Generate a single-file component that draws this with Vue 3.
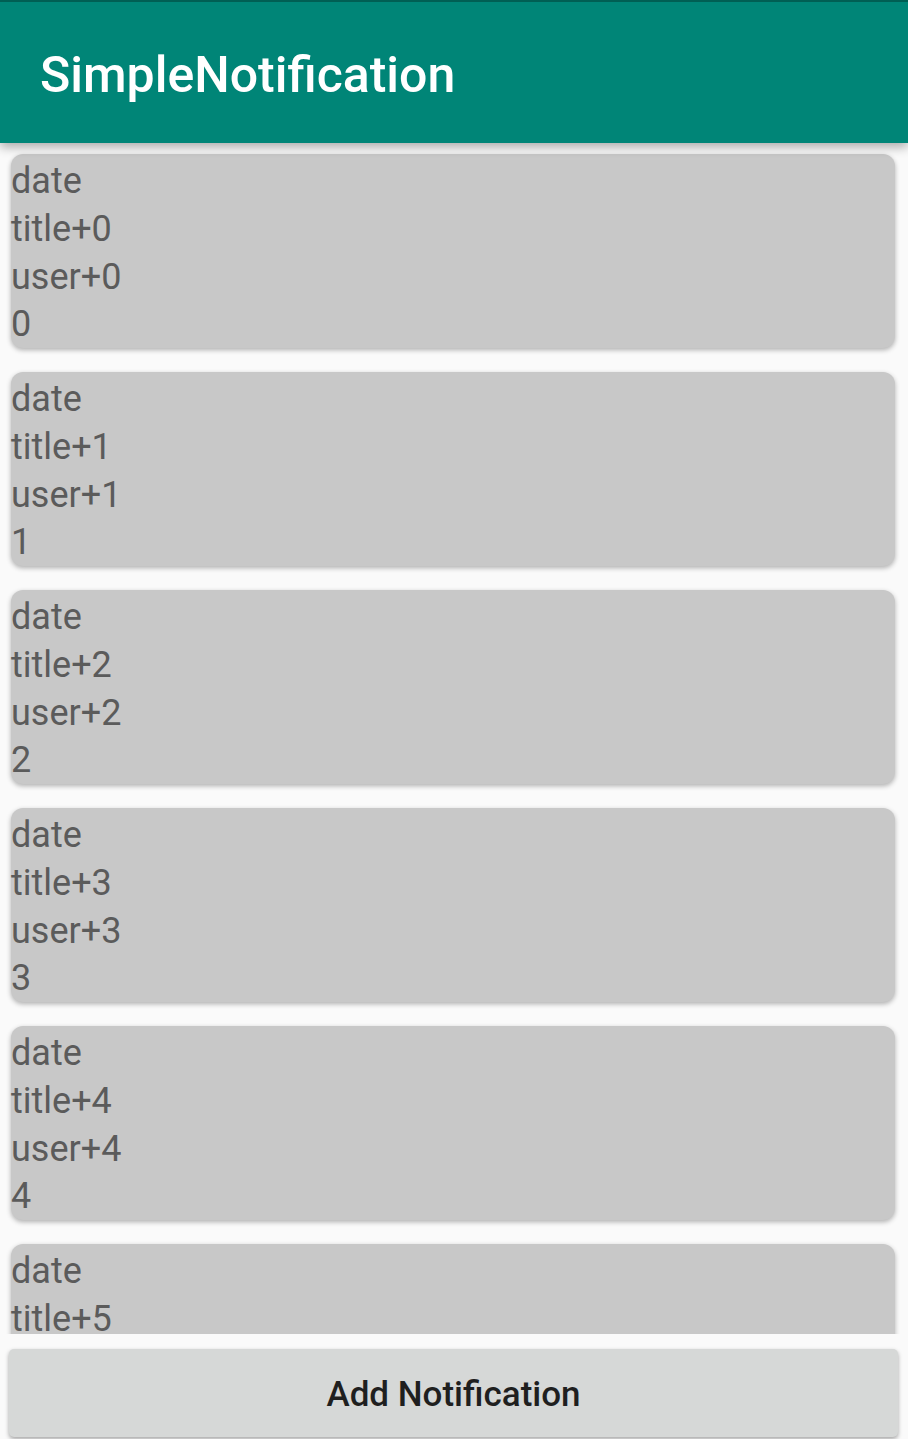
<script setup>
const items = Array.from({ length: 6 }, (_, i) => i)
</script>

<template>
  <div class="screen">
    <header class="bar"><h1>SimpleNotification</h1></header>
    <main class="list">
      <article v-for="n in items" :key="n" class="card">
        <p>date</p>
        <p>title+{{ n }}</p>
        <p>user+{{ n }}</p>
        <p>{{ n }}</p>
      </article>
    </main>
    <footer class="foot"><button type="button">Add Notification</button></footer>
  </div>
</template>

<style>
body { background: #fafafa; }
</style>

<style scoped>
.screen {
  display: flex;
  flex-direction: column;
  height: 100vh;
  overflow: hidden;
  background: #fafafa;
  font-family: Roboto, "Liberation Sans", sans-serif;
}
.bar {
  position: relative;
  flex: none;
  padding: 43px 40px 37px;
  border-top: 2px solid #005f54;
  background: #008577;
  box-shadow: 0 4px 10px rgba(0, 0, 0, 0.32);
  z-index: 1;
}
h1 {
  margin: 0;
  color: #fff;
  font-size: 50px;
  font-weight: 500;
  line-height: 61px;
}
.list {
  display: flex;
  flex: 1;
  flex-direction: column;
  gap: 24px;
  min-height: 0;
  overflow-y: auto;
  padding: 11px 13px 12px 11px;
  scrollbar-width: none;
}
.card {
  flex: none;
  padding-top: 3px;
  border-radius: 12px;
  background: #c8c8c8;
  box-shadow: 0 2px 5px rgba(0, 0, 0, 0.3);
}
p {
  margin: 0;
  color: #5b5b5b;
  font-size: 36px;
  line-height: 48px;
}
p:last-child {
  line-height: 47px;
}
.foot {
  flex: none;
  padding: 15px 10px 2px 9px;
}
button {
  display: block;
  width: 100%;
  padding: 4px 0 0;
  border: 0;
  border-radius: 5px;
  background: #d6d8d7;
  box-shadow: 0 2px 4px rgba(0, 0, 0, 0.35);
  color: #1f1f1f;
  font: 500 35px/84px Roboto, "Liberation Sans", sans-serif;
}
</style>
